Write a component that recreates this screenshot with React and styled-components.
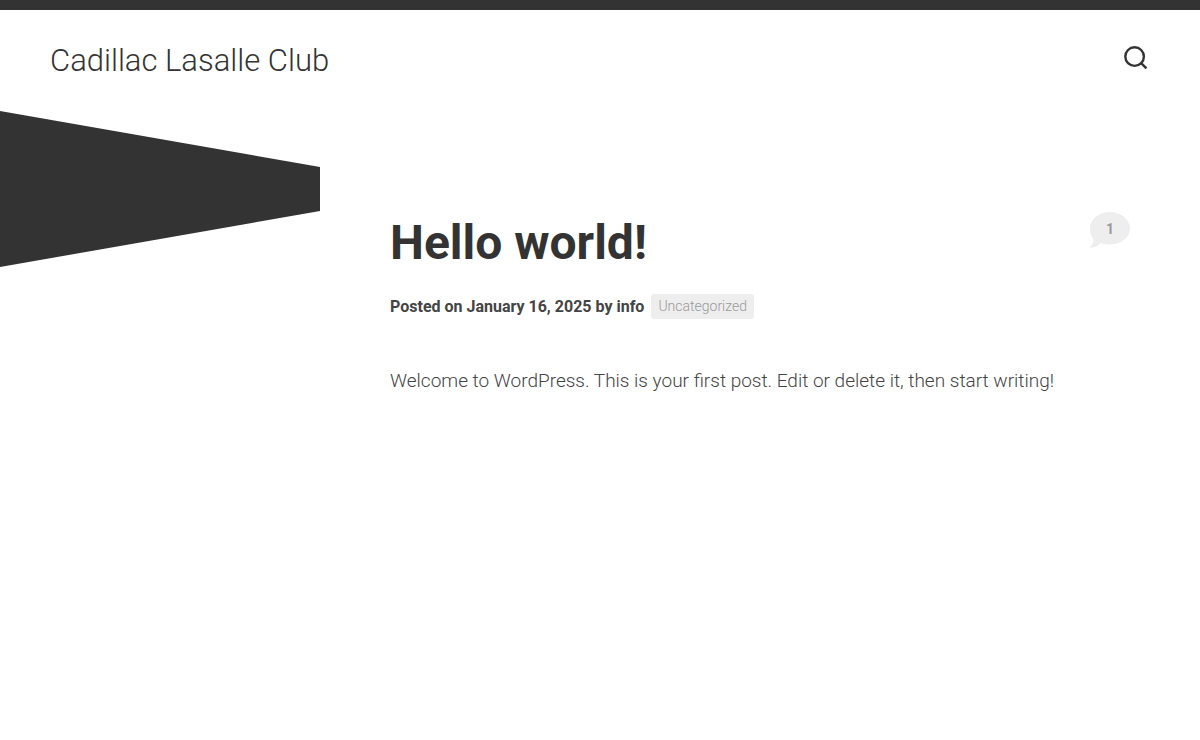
import React from 'react';
import styled, { createGlobalStyle } from 'styled-components';

const GlobalStyle = createGlobalStyle`
    * {
        box-sizing: border-box;
    }

    body {
        margin: 0;
        background: #fff;
        color: #333;
        font-family: Roboto, 'Liberation Sans', sans-serif;
        font-weight: 300;
    }

    a {
        color: inherit;
        text-decoration: none;
    }
`;

function SearchIcon() {
    return (
        <svg width="24" height="24" viewBox="0 0 24 24" fill="none" stroke="#333" strokeWidth="2.4" aria-hidden="true">
            <circle cx="10.6" cy="10.6" r="9.3" />
            <path d="M17.2 17.2 L22.4 22.4" />
        </svg>
    );
}

function CommentBubble({ count }) {
    return (
        <BubbleStyled href="#comments" aria-label={`${count} comment`}>
            <svg width="40" height="36" viewBox="0 0 40 36" fill="#eee" aria-hidden="true">
                <path d="M20 0C31 0 40 7.2 40 16.3S31 32.6 20 32.6c-3.4 0-6.6-.6-9.3-1.7C7.8 33.8 4.3 35.4.6 35.8c-.5 0-.8-.6-.4-1 2-2 3.3-4.5 3.1-7.5C1.2 24.2 0 20.5 0 16.3 0 7.2 9 0 20 0z" />
            </svg>
            <span>{count}</span>
        </BubbleStyled>
    );
}

function App() {
    return (
        <>
            <GlobalStyle />
            <Header>
                <SiteTitle>
                    <a href="#home">Cadillac Lasalle Club</a>
                </SiteTitle>
                <SearchButton type="button" aria-label="Search">
                    <SearchIcon />
                </SearchButton>
            </Header>
            <Wrapper>
                <Sidebar />
                <Article>
                    <PostHeader>
                        <PostTitle>Hello world!</PostTitle>
                        <CommentBubble count={1} />
                    </PostHeader>
                    <PostMeta>
                        <span>
                            Posted on January 16, 2025 by <a href="#author">info</a>
                        </span>
                        <Category href="#category">Uncategorized</Category>
                    </PostMeta>
                    <PostBody>
                        Welcome to WordPress. This is your first post. Edit or delete it, then start writing!
                    </PostBody>
                </Article>
            </Wrapper>
        </>
    );
}

const Header = styled.header`
    display: flex;
    align-items: flex-start;
    justify-content: space-between;
    padding: 30px 50px 29px;
    border-top: 10px solid #333;
`;

const SiteTitle = styled.p`
    margin: 0;
    font-size: 31px;
    font-weight: 300;
    line-height: 42px;
`;

const SearchButton = styled.button`
    display: flex;
    padding: 6px 2px;
    border: none;
    background: none;
    cursor: pointer;
`;

const Wrapper = styled.div`
    display: flex;
    align-items: flex-start;
`;

const Sidebar = styled.aside`
    flex: 0 0 320px;
    height: 156px;
    background: #333;
    clip-path: polygon(0 0, 100% 56px, 100% 100px, 0 100%);
`;

const Article = styled.article`
    flex: 1;
    min-width: 0;
    padding: 101px 70px 60px;
`;

const PostHeader = styled.div`
    display: flex;
    align-items: flex-start;
    justify-content: space-between;
`;

const PostTitle = styled.h1`
    margin: 0;
    font-size: 48px;
    font-weight: 700;
    line-height: 62px;
`;

const BubbleStyled = styled.a`
    display: grid;
    place-items: start center;

    svg,
    span {
        grid-area: 1 / 1;
    }

    span {
        color: #999;
        font-size: 14px;
        font-weight: 700;
        line-height: 34px;
    }
`;

const PostMeta = styled.div`
    display: flex;
    align-items: center;
    gap: 7px;
    margin-top: 20px;
    color: #444;
    font-size: 16px;
    font-weight: 700;
    line-height: 24px;
`;

const Category = styled.a`
    padding: 0 7px;
    border-radius: 3px;
    background: #eee;
    color: #999;
    font-size: 14px;
    font-weight: 300;
    line-height: 25px;
`;

const PostBody = styled.p`
    margin: 46px 0 0;
    color: #444;
    font-size: 19px;
    line-height: 32px;
`;

export default App;
